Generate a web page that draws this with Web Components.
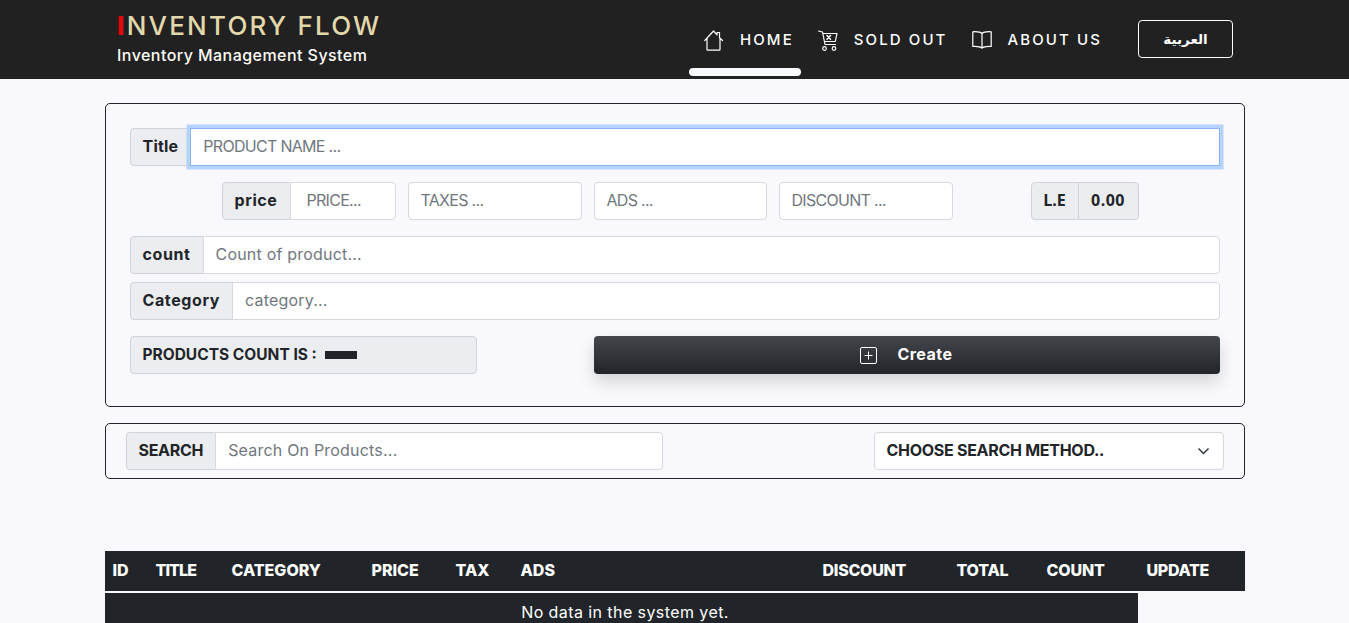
<!DOCTYPE html>
<html lang="en">
<head>
<meta charset="utf-8">
<title>Inventory Flow</title>
<style>
  html, body { margin: 0; background: #f8f8fd; }
  body { font-family: Inter, "Noto Sans", sans-serif; color: #212529; overflow-x: hidden; }
</style>
</head>
<body>
<inv-header>
  <inv-nav-link active label="HOME" icon="home"></inv-nav-link>
  <inv-nav-link label="SOLD OUT" icon="cart"></inv-nav-link>
  <inv-nav-link label="ABOUT US" icon="book" style="margin-left:0"></inv-nav-link>
</inv-header>
<inv-page>
  <inv-card style="padding:24px 24px 32px">
    <inv-field label="Title" placeholder="PRODUCT NAME ..." focused caps ls=".2"></inv-field>
    <inv-price-row></inv-price-row>
    <inv-field label="count" placeholder="Count of product..." ls=".6"></inv-field>
    <inv-field label="Category" placeholder="category..." ls=".6" style="margin-top:8px"></inv-field>
    <inv-actions></inv-actions>
  </inv-card>
  <inv-card style="margin-top:16px;padding:8px 20px">
    <inv-search></inv-search>
  </inv-card>
  <inv-table></inv-table>
</inv-page>

<script>
const ICONS = {
  home: '<path d="M.8 10.5 9.5 1 13 4.8V2.5h2.5v5.2l3 2.8M3 8.5v11q0 .7.7.7h11.6q.7 0 .7-.7v-11"/>',
  cart: '<path d="M.5 1l4 1L7 14.5h10.5M5 3.5h14l-1.7 8H6.5"/><path d="m9 5.5 3.5 3.8M12.5 5.5 9 9.3" stroke-width="1.5"/><circle cx="6.5" cy="18.5" r="1.8"/><circle cx="16" cy="18.5" r="1.8"/>',
  book: '<path d="M10 3.5C8.5 2 5.5 1.5.8 1.8v14.700c4.700-.3 7.700.2 9.200 1.700 1.500-1.500 4.500-2 9.200-1.700V1.800C14.500 1.500 11.500 2 10 3.500zM10 3.500v14.700"/>'
};

function makeEl(name, html) {
  customElements.define(name, class extends HTMLElement {
    constructor() {
      super();
      this.attachShadow({mode: 'open'});
    }
    connectedCallback() {
      this.shadowRoot.innerHTML = typeof html === 'function' ? html(this) : html;
    }
  });
}

makeEl('inv-header', `
  <style>
    :host { display: block; background: #212121; height: 79px; }
    .bar { display: flex; justify-content: space-between; align-items: flex-start; height: 79px; padding: 0 116px 0 117px; box-sizing: border-box; }
    .brand { padding-top: 11px; }
    h1 { margin: 0; font-size: 26px; font-weight: 500; line-height: 30px; letter-spacing: 2.22px; color: #e3d8ac; white-space: nowrap; }
    h1 span { color: #e2080b; font-weight: 800; }
    p { margin: 0; padding-top: 3px; color: #fdfdf8; font-size: 16px; font-weight: 500; line-height: 22px; letter-spacing: .45px; white-space: nowrap; }
    .right { display: flex; align-items: flex-start; }
    nav { display: flex; }
    button { margin: 20px 0 0 27px; width: 95px; height: 38px; background: transparent; color: #fff; border: 1px solid #fff; border-radius: 4px; font: 700 13.5px "DejaVu Sans", sans-serif; padding: 0; }
  </style>
  <div class="bar">
    <div class="brand">
      <h1><span>I</span>NVENTORY FLOW</h1>
      <p>Inventory Management System</p>
    </div>
    <div class="right">
      <nav><slot></slot></nav>
      <button>العربية</button>
    </div>
  </div>`);

makeEl('inv-nav-link', el => `
  <style>
    :host { display: block; position: relative; height: 79px; margin-left: 2px; }
    :host([active]) { margin-left: 0; }
    a { display: flex; align-items: center; height: 38px; margin-top: 20px; padding: 0 9px 0 15px; gap: 16px; color: #fff; text-decoration: none; font-size: 15px; font-weight: 500; letter-spacing: 2.1px; white-space: nowrap; }
    :host([active]) a { padding-right: 7px; }
    svg { width: 20px; height: 21px; margin-top: 3px; fill: none; stroke: #fff; stroke-width: 1.2; stroke-linejoin: round; stroke-linecap: round; flex: none; }
    .line { position: absolute; left: 0; right: 0; top: 68px; height: 8px; border-radius: 4px; background: #f8f8fd; }
  </style>
  <a href="#"><svg viewBox="0 0 20 21">${ICONS[el.getAttribute('icon')]}</svg>${el.getAttribute('label')}</a>
  ${el.hasAttribute('active') ? '<div class="line"></div>' : ''}`);

makeEl('inv-page', `
  <style>:host { display: block; width: 1140px; margin: 0 auto; padding-top: 24px; }</style>
  <slot></slot>`);

makeEl('inv-card', `
  <style>:host { display: block; border: 1px solid #212529; border-radius: 5px; }</style>
  <slot></slot>`);

const GROUP_CSS = `
  .group { display: flex; height: 38px; box-sizing: border-box; }
  .tag { display: flex; align-items: center; padding: 0 12px 2px; background: #ecedf0; border: 1px solid #ced4da; border-radius: 4px 0 0 4px; font-size: 16px; font-weight: 700; color: #212529; white-space: nowrap; box-sizing: border-box; }
  input { flex: 1; min-width: 0; height: 38px; box-sizing: border-box; padding: 0 12px 2px; margin-left: -1px; background: #fff; border: 1px solid #d6d9dd; border-radius: 0 4px 4px 0; font: 400 16px Inter, sans-serif; letter-spacing: .2px; color: #212529; outline: none; }
  input.caps { letter-spacing: -.7px; }
  input::placeholder { color: #70777e; opacity: 1; }
`;

makeEl('inv-field', el => `
  <style>
    :host { display: block; }
    ${GROUP_CSS}
    input.focus { border-color: #86b7fe; border-radius: 0; padding-left: 12px; box-shadow: 0 0 0 3.5px #b6d4fb; position: relative; }
  </style>
  <div class="group">
    <span class="tag" style="letter-spacing:${el.getAttribute('ls') || 0}px">${el.getAttribute('label')}</span>
    <input placeholder="${el.getAttribute('placeholder')}" class="${el.hasAttribute('focused') ? 'focus ' : ''}${el.hasAttribute('caps') ? 'caps' : ''}">
  </div>`);

makeEl('inv-price-row', `
  <style>
    :host { display: flex; gap: 12px; margin: 16px 0; padding-left: 92px; }
    ${GROUP_CSS}
    .group { width: 174px; flex: none; }
    .group.ads { width: 173px; }
    input.solo { margin-left: 0; border-radius: 4px; }
    input.price { padding-left: 16px; }
    .total { width: 108px; margin-left: 66px; }
    .total .tag { font-family: "Open Sans", sans-serif; flex: none; width: 48px; padding: 0 0 2px; justify-content: center; }
    .total .tag + .tag { border-radius: 0 4px 4px 0; margin-left: -1px; flex: 1; width: auto; letter-spacing: .5px; }
  </style>
  <div class="group"><span class="tag" style="letter-spacing:.6px">price</span><input class="caps price" placeholder="PRICE..."></div>
  <div class="group"><input class="solo caps" placeholder="TAXES ..."></div>
  <div class="group ads"><input class="solo caps" placeholder="ADS ..."></div>
  <div class="group"><input class="solo caps" placeholder="DISCOUNT ..."></div>
  <div class="group total"><span class="tag">L.E</span><span class="tag">0.00</span></div>`);

makeEl('inv-actions', `
  <style>
    :host { display: flex; justify-content: space-between; margin-top: 16px; }
    .count { width: 347px; height: 38px; box-sizing: border-box; display: flex; align-items: center; padding: 0 12px 2px; gap: 8px; background: #ecedf0; border: 1px solid #ced4da; border-radius: 4px; font-size: 15.5px; font-weight: 700; white-space: nowrap; }
    .count i { width: 32px; height: 8px; margin-top: 2px; background: #212529; }
    button { width: 626px; height: 38px; display: flex; align-items: center; justify-content: center; gap: 20px; padding: 0 0 2px; border: 0; border-radius: 4px; color: #fff; background: linear-gradient(#43464a, #212529); box-shadow: 0 8px 16px rgba(0,0,0,.15); font: 700 16px Inter, sans-serif; letter-spacing: .5px; }
    svg { width: 17px; height: 17px; margin-top: 2px; fill: none; stroke: #fff; }
  </style>
  <div class="count">PRODUCTS COUNT IS : <i></i></div>
  <button><svg viewBox="0 0 17 17"><rect x=".5" y=".5" width="16" height="16" rx="1.5"/><path d="M8.5 4.5v8M4.5 8.5h8"/></svg>Create</button>`);

makeEl('inv-search', `
  <style>
    :host { display: flex; justify-content: space-between; }
    ${GROUP_CSS}
    .group { width: 537px; }
    .tag { letter-spacing: -.3px; }
    .pick { position: relative; width: 350px; height: 38px; }
    select { appearance: none; width: 100%; height: 100%; padding: 0 12px 2px; border: 1px solid #d6d9dd; border-radius: 4px; background: #fff; color: #212529; font: 700 16px Inter, sans-serif; letter-spacing: -.28px; }
    svg { position: absolute; right: 14px; top: 15px; width: 13px; height: 9px; fill: none; stroke: #343a40; stroke-width: 1.5; pointer-events: none; }
  </style>
  <div class="group"><span class="tag">SEARCH</span><input placeholder="Search On Products..."></div>
  <div class="pick">
    <select><option>CHOOSE SEARCH METHOD..</option></select>
    <svg viewBox="0 0 13 9"><path d="m1.5 1.5 5 5 5-5"/></svg>
  </div>`);

const COLUMNS = [['ID',43,0],['TITLE',76,-.9],['CATEGORY',140,0],['PRICE',84,0],['TAX',65,0],['ADS',302,0],['DISCOUNT',134,-.25],['TOTAL',90,-.2],['COUNT',100,-.15],['UPDATE',106,-.3]];

makeEl('inv-table', `
  <style>
    :host { display: block; margin-top: 72px; color: #fff; }
    .head { display: grid; grid-template-columns: ${COLUMNS.map(c => c[1] + 'px').join(' ')}; background: #212529; height: 40px; align-items: center; padding-bottom: 2px; box-sizing: border-box; font-size: 16px; font-weight: 800; }
    .head span { padding-left: 8px; white-space: nowrap; }
    .empty { margin-top: 2px; width: 1033px; height: 38px; box-sizing: border-box; padding-left: 8px; background: #212529; text-align: center; line-height: 38px; font-size: 16px; letter-spacing: .42px; }
  </style>
  <div class="head">${COLUMNS.map(c => `<span style="letter-spacing:${c[2]}px">${c[0]}</span>`).join('')}</div>
  <div class="empty">No data in the system yet.</div>`);
</script>
</body>
</html>
